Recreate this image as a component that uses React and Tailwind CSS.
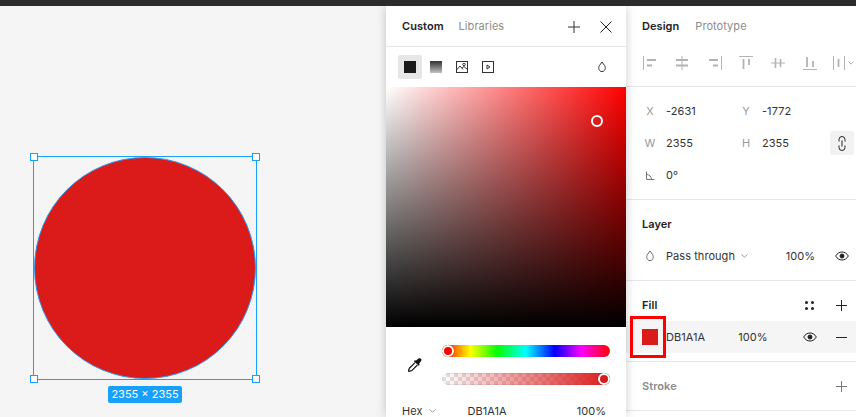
import React from "react";

const S = ({ w = 16, h = 16, children, className = "" }) => (
  <svg width={w} height={h} viewBox={`0 0 ${w} ${h}`} fill="none" stroke="currentColor" strokeWidth="1" className={`block shrink-0 ${className}`}>
    {children}
  </svg>
);

const Plus = ({ size = 11, className = "" }) => (
  <S w={size} h={size} className={className}>
    <path d={`M${size / 2} 0v${size}M0 ${size / 2}h${size}`} />
  </S>
);

const Eye = () => (
  <S w={14} h={10} className="text-[#222]">
    <path d="M0.7 5C2.2 2.3 4.4 1 7 1s4.8 1.3 6.3 4C11.8 7.7 9.6 9 7 9S2.2 7.7 0.7 5Z" />
    <circle cx="7" cy="5" r="2" fill="currentColor" />
  </S>
);

const Drop = ({ className = "" }) => (
  <S w={10} h={12} className={className}>
    <path d="M5 1 L7.6 4.6 C9.2 7.2 7.8 10.6 5 10.6 C2.2 10.6 0.8 7.2 2.4 4.6 Z" />
  </S>
);

const Chevron = () => (
  <S w={7} h={4} className="text-[#999]"><path d="M0.5 0.5 3.5 3.2 6.5 0.5" /></S>
);

const AlignIcons = () => (
  <div className="flex items-center h-[32px] pt-[1px] text-[#b3b3b3]">
    <S w={14} h={14} className="ml-[16px]"><path d="M1.5 0v14" /><path d="M5 4h9M5 9.5h5" strokeWidth="1.8" /></S>
    <S w={12} h={14} className="ml-[20px]"><path d="M6 0v14" /><path d="M0 4h12M0 9.5h12" strokeWidth="1.8" /></S>
    <S w={14} h={14} className="ml-[20px]"><path d="M13.5 0v14" /><path d="M1 4h9M5 9.5h5" strokeWidth="1.8" /></S>
    <S w={14} h={14} className="ml-[17px]"><path d="M0 0.5h14" /><path d="M4.5 3v10M10 3v6" strokeWidth="1.8" /></S>
    <S w={14} h={12} className="ml-[18px]"><path d="M0 6h14" /><path d="M4.5 1v10M9.5 2v8" strokeWidth="1.6" /></S>
    <S w={14} h={14} className="ml-[18px]"><path d="M0 13.5h14" /><path d="M4 1v10M10 5v6" strokeWidth="1.8" /></S>
    <S w={12} h={14} className="ml-[16px]"><path d="M0.5 0v14M11.5 0v14" /><path d="M5.5 3v8" strokeWidth="1.8" /></S>
    <S w={6} h={4} className="ml-[3px]"><path d="M0.5 0.5 3 3.2 5.5 0.5" /></S>
  </div>
);

const Field = ({ label, value }) => (
  <div className="flex items-center w-[96px] pt-[1px]">
    <span className="w-[30px] pr-[2px] text-center text-[#999]">{label}</span>
    <span>{value}</span>
  </div>
);

const Row = ({ className = "", children }) => (
  <div className={`flex items-center text-[11px] tracking-[0.005em] text-[#333] ${className}`}>{children}</div>
);

const Handle = ({ className }) => (
  <div className={`absolute w-[8px] h-[8px] bg-white border-[1.5px] border-[#18a0fb] ${className}`} />
);

const Canvas = () => (
  <div className="relative flex-1 bg-[#f5f5f5]">
    <div className="absolute left-[33px] top-[150px] w-[224px] h-[224px] border border-[#18a0fb]">
      <div className="w-full h-full rounded-full bg-[#db1a1a] border border-[#2a9df4]" />
      <Handle className="-left-[4px] -top-[4px]" />
      <Handle className="-right-[4px] -top-[4px]" />
      <Handle className="-left-[4px] -bottom-[4px]" />
      <Handle className="-right-[4px] -bottom-[4px]" />
    </div>
    <div className="absolute left-[108px] top-[380px] w-[74px] h-[17px] rounded-[2px] bg-[#18a0fb] text-white text-[11px] leading-[17px] text-center">
      2355 × 2355
    </div>
  </div>
);

const ColorPanel = () => (
  <div className="relative z-10 w-[240px] bg-white shadow-[0_0_10px_rgba(0,0,0,0.2)] flex flex-col">
    <div className="h-[41px] shrink-0 flex items-center pl-[16px] pr-[14px] pt-[1px] text-[11px] tracking-[0.005em] border-b border-[#e6e6e6]">
      <span className="font-semibold text-[#222]">Custom</span>
      <span className="ml-[15px] text-[#8c8c8c]">Libraries</span>
      <Plus size={12} className="ml-auto text-[#333]" />
      <S w={12} h={12} className="ml-[20px] text-[#222]"><path d="M0.5 0.5l11 11M11.5 0.5l-11 11" /></S>
    </div>
    <div className="h-[40px] shrink-0 flex items-center pl-[12px] pr-[19px]">
      <div className="w-[24px] h-[24px] rounded-[2px] bg-[#e6e6e6] flex items-center justify-center">
        <div className="w-[12px] h-[12px] bg-[#1a1a1a]" />
      </div>
      <div className="ml-[8px] w-[12px] h-[12px] bg-gradient-to-b from-[#333] to-[#c4c4c4]" />
      <S w={12} h={12} className="ml-[14px] text-[#333]">
        <rect x="0.5" y="0.5" width="11" height="11" />
        <path d="M0.5 9 4 5l3 3.5 M6 7l2-1.5 3.5 3" />
        <circle cx="8" cy="3.5" r="1.2" />
      </S>
      <S w={12} h={12} className="ml-[14px] text-[#333]">
        <rect x="0.5" y="0.5" width="11" height="11" />
        <path d="M5 4v4l3-2Z" />
      </S>
      <Drop className="ml-auto text-[#333]" />
    </div>
    <div className="relative h-[240px] shrink-0 bg-[linear-gradient(to_top,#000,transparent),linear-gradient(to_right,#fff,#f00)]">
      <div className="absolute left-[205px] top-[28px] w-[12px] h-[12px] rounded-full border-2 border-white" />
    </div>
    <div className="flex items-center h-[68px] shrink-0 pt-[8px] pl-[22px] pr-[16px]">
      <S w={14} h={14} className="text-[#111]">
        <path d="M8 2.5 10.6 0.6c.9-.7 2.2-.2 2.6.5.5.9.1 1.9-.5 2.5L11 6l.8.8-1 1L5.9 3.2l1-1Z" fill="currentColor" stroke="none" />
        <path d="M7 4.6 1.6 10c-.5.5-.5 1-.6 1.5L.5 13l.5.5 1.5-.5c.5-.1 1-.1 1.5-.6L9.4 7" strokeWidth="1.2" />
      </S>
      <div className="ml-[20px] flex-1 flex flex-col gap-[16px]">
        <div className="relative h-[12px] rounded-full bg-[linear-gradient(to_right,#f00,#ff0_17%,#0f0_33%,#0ff_50%,#00f_67%,#f0f_83%,#f00)]">
          <div className="absolute left-0 top-0 w-[12px] h-[12px] rounded-full bg-[#f00] border-2 border-white shadow-[0_0_1px_rgba(0,0,0,0.5)]" />
        </div>
        <div className="relative h-[12px] rounded-full bg-white bg-[repeating-conic-gradient(#e2e2e2_0_25%,#fff_0_50%)] bg-[length:8px_8px] shadow-[inset_0_0_0_1px_rgba(0,0,0,0.08)]">
          <div className="h-full w-full rounded-full bg-gradient-to-r from-transparent to-[#db1a1a]" />
          <div className="absolute right-0 top-0 w-[12px] h-[12px] rounded-full bg-[#db1a1a] border-2 border-white shadow-[0_0_1px_rgba(0,0,0,0.5)]" />
        </div>
      </div>
    </div>
    <div className="flex items-center mt-[10px] h-[12px] pl-[16px] pr-[20px] text-[11px] leading-[12px] tracking-[0.005em] text-[#333]">
      <span>Hex</span>
      <span className="ml-[6px]"><Chevron /></span>
      <span className="ml-[32px]">DB1A1A</span>
      <span className="ml-auto">100%</span>
    </div>
  </div>
);

const DesignPanel = () => (
  <div className="relative z-0 w-[230px] bg-white flex flex-col">
    <div className="h-[40px] shrink-0 flex items-center px-[16px] pt-[1px] text-[11px] tracking-[0.005em]">
      <span className="font-semibold text-[#222]">Design</span>
      <span className="ml-[16px] text-[#8c8c8c]">Prototype</span>
    </div>
    <div className="h-[41px] shrink-0 border-b border-[#e6e6e6]"><AlignIcons /></div>
    <div className="border-b border-[#e6e6e6] h-[113px] shrink-0 pt-[8px]">
      <Row className="h-[32px]">
        <div className="pl-[10px] flex"><Field label="X" value="-2631" /><Field label="Y" value="-1772" /></div>
      </Row>
      <Row className="h-[32px]">
        <div className="pl-[10px] flex"><Field label="W" value="2355" /><Field label="H" value="2355" /></div>
        <div className="ml-auto mr-[2px] w-[24px] h-[24px] rounded-[2px] bg-[#f2f2f2] flex items-center justify-center">
          <S w={8} h={15} className="text-[#222]">
            <path d="M1 5.5V3.5a3 3 0 0 1 6 0V5.5M1 9.5v2a3 3 0 0 0 6 0V9.5M4 4.5v6" />
          </S>
        </div>
      </Row>
      <Row className="h-[32px]">
        <div className="pl-[10px] flex items-center pt-[1px]">
          <span className="w-[30px] pr-[2px] flex justify-center">
            <S w={9} h={9} className="text-[#777]"><path d="M0.5 0.5v8h8M0.5 3.5a5 5 0 0 1 5 5" /></S>
          </span>
          <span>0°</span>
        </div>
      </Row>
    </div>
    <div className="border-b border-[#e6e6e6] h-[81px] shrink-0">
      <div className="h-[48px] flex items-center px-[16px] pt-[1px] text-[11px] tracking-[0.005em] font-semibold text-[#222]">Layer</div>
      <Row className="h-[16px] pl-[19px] pr-[7px]">
        <Drop className="text-[#666]" />
        <span className="ml-[11px]">Pass through</span>
        <span className="ml-[6px]"><Chevron /></span>
        <span className="ml-auto mr-[20px]">100%</span>
        <Eye />
      </Row>
    </div>
    <div className="border-b border-[#e6e6e6] h-[81px] shrink-0">
      <div className="h-[48px] flex items-center pl-[16px] pr-[9px] pt-[1px] text-[11px] tracking-[0.005em] font-semibold text-[#222]">
        <span>Fill</span>
        <div className="ml-auto grid grid-cols-2 gap-[3px]">
          <i className="w-[3px] h-[3px] rounded-full bg-[#222]" />
          <i className="w-[3px] h-[3px] rounded-full bg-[#222]" />
          <i className="w-[3px] h-[3px] rounded-full bg-[#222]" />
          <i className="w-[3px] h-[3px] rounded-full bg-[#222]" />
        </div>
        <Plus className="ml-[22px] text-[#222]" />
      </div>
      <Row className="h-[32px] bg-[#f5f5f5] -mt-[8px] pl-[16px] pr-[9px]">
        <div className="w-[16px] h-[16px] shrink-0 bg-[#db1a1a]" />
        <span className="ml-[8px]">DB1A1A</span>
        <span className="ml-[33px]">100%</span>
        <span className="ml-auto mr-[19px]"><Eye /></span>
        <div className="w-[11px] h-px shrink-0 bg-[#222]" />
      </Row>
    </div>
    <div className="border-b border-[#e6e6e6] h-[49px] shrink-0 flex items-center pl-[16px] pr-[9px] pt-[1px] text-[11px] tracking-[0.005em] font-semibold text-[#8c8c8c]">
      <span>Stroke</span>
      <Plus className="ml-auto text-[#777]" />
    </div>
    <div className="absolute left-[4px] top-[310px] w-[36px] h-[42px] border-[3px] border-[#ff0000] z-20" />
  </div>
);

export default function App() {
  return (
    <div className="w-[856px] h-[417px] overflow-hidden flex flex-col bg-white font-['Inter',sans-serif]">
      <div className="h-[6px] shrink-0 bg-[#2c2c2c] relative z-20" />
      <div className="flex flex-1 min-h-0">
        <Canvas />
        <ColorPanel />
        <DesignPanel />
      </div>
    </div>
  );
}
